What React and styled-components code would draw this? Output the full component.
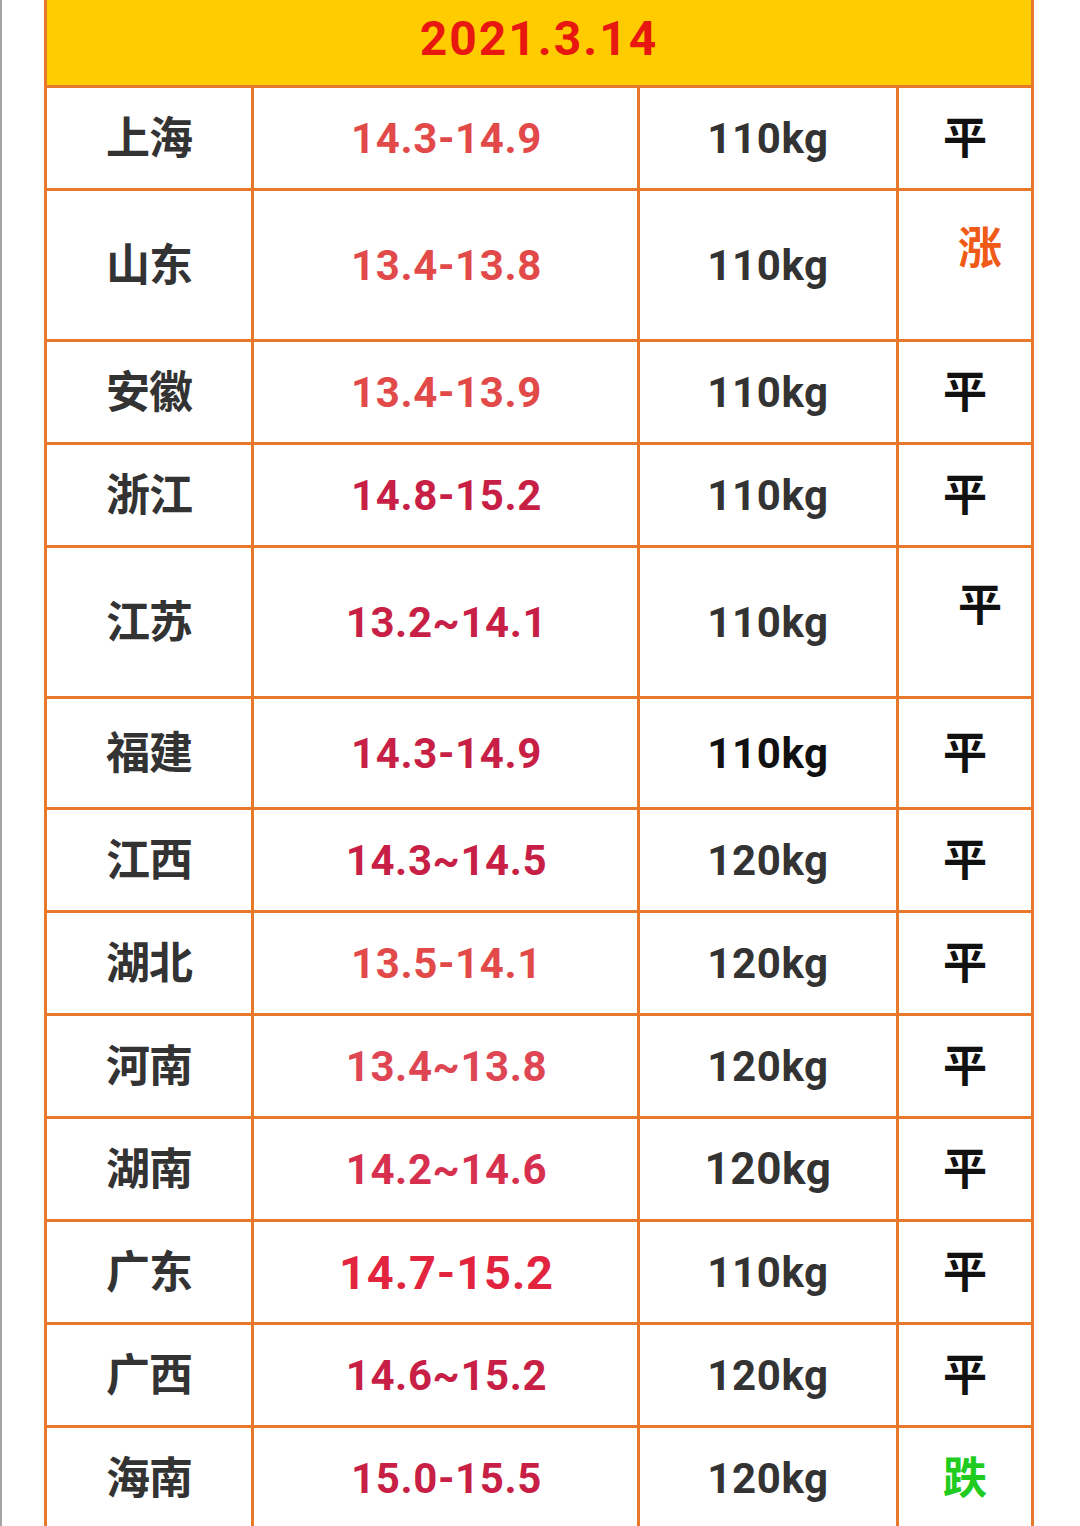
import styled, { createGlobalStyle } from 'styled-components';

const GlobalStyle = createGlobalStyle`
  html, body {
    margin: 0;
    padding: 0;
    background: #ffffff;
  }
  body {
    font-family: 'Roboto', 'Noto Sans CJK SC', sans-serif;
  }
`;

const Page = styled.div`
  border-left: 2px solid #a3a3a3;
  padding-left: 42px;
  box-sizing: border-box;
  overflow: hidden;
  height: 1526px;
`;

const Table = styled.div`
  width: 990px;
  display: grid;
  grid-template-columns: 204px 383px 256px 132px;
  gap: 3px;
  padding: 0 3px 3px 3px;
  background: #e8792b;
  box-sizing: border-box;
`;

const Header = styled.div`
  grid-column: 1 / -1;
  height: 85px;
  background: #ffcc00;
  display: flex;
  align-items: center;
  justify-content: center;
  padding-bottom: 8px;
  box-sizing: border-box;
  color: #e8170f;
  font-family: 'Roboto', sans-serif;
  font-weight: 700;
  font-size: 48px;
  letter-spacing: 2px;
`;

const Cell = styled.div`
  background: #fff;
  height: ${(p) => p.$h}px;
  display: flex;
  align-items: center;
  justify-content: center;
  box-sizing: border-box;
  font-weight: 700;
`;

const Region = styled(Cell)`
  color: #333;
  font-family: 'Noto Sans CJK SC', sans-serif;
  font-size: 44px;
  letter-spacing: -1px;
  padding-bottom: 6px;
`;

const Price = styled(Cell)`
  color: ${(p) => p.$color};
  font-family: 'Roboto', sans-serif;
  font-size: ${(p) => (p.$big ? 47 : 42)}px;
  letter-spacing: ${(p) => (p.$big ? 0.8 : 0.6)}px;
  padding-left: 2px;
`;

const Weight = styled(Cell)`
  color: ${(p) => (p.$dark ? '#111' : '#333')};
  font-family: 'Roboto', sans-serif;
  font-size: ${(p) => (p.$big ? 44 : 42)}px;
  letter-spacing: 0.6px;
`;

const Trend = styled(Cell)`
  color: ${(p) => p.$color};
  font-family: 'Noto Sans CJK SC', sans-serif;
  font-size: 44px;
  padding-left: ${(p) => (p.$shift ? 30 : 0)}px;
  padding-bottom: ${(p) => (p.$shift ? 40 : 6)}px;
`;

const LIGHT = '#e24a4a';
const CRIMSON = '#c71f45';
const BRIGHT = '#e2243e';
const MID = '#d6304e';

const rows = [
  { name: '上海', price: '14.3-14.9', pc: LIGHT, w: '110kg', t: '平', h: 100 },
  { name: '山东', price: '13.4-13.8', pc: LIGHT, w: '110kg', t: '涨', tc: '#f05a17', shift: true, h: 148 },
  { name: '安徽', price: '13.4-13.9', pc: LIGHT, w: '110kg', t: '平', h: 100 },
  { name: '浙江', price: '14.8-15.2', pc: CRIMSON, w: '110kg', t: '平', h: 100 },
  { name: '江苏', price: '13.2~14.1', pc: CRIMSON, w: '110kg', t: '平', shift: true, h: 148 },
  { name: '福建', price: '14.3-14.9', pc: CRIMSON, w: '110kg', t: '平', dark: true, h: 108 },
  { name: '江西', price: '14.3~14.5', pc: CRIMSON, w: '120kg', t: '平', h: 100 },
  { name: '湖北', price: '13.5-14.1', pc: LIGHT, w: '120kg', t: '平', h: 100 },
  { name: '河南', price: '13.4~13.8', pc: '#dd4652', w: '120kg', t: '平', h: 100 },
  { name: '湖南', price: '14.2~14.6', pc: MID, w: '120kg', t: '平', bigW: true, h: 100 },
  { name: '广东', price: '14.7-15.2', pc: BRIGHT, big: true, w: '110kg', t: '平', h: 100 },
  { name: '广西', price: '14.6~15.2', pc: CRIMSON, w: '120kg', t: '平', h: 100 },
  { name: '海南', price: '15.0-15.5', pc: CRIMSON, w: '120kg', t: '跌', tc: '#1fcc1f', h: 100 },
];

function Row({ r }) {
  return (
    <>
      <Region $h={r.h}>{r.name}</Region>
      <Price $h={r.h} $color={r.pc} $big={r.big}>
        {r.price}
      </Price>
      <Weight $h={r.h} $dark={r.dark} $big={r.bigW}>
        {r.w}
      </Weight>
      <Trend $h={r.h} $color={r.tc || '#111'} $shift={r.shift}>
        {r.t}
      </Trend>
    </>
  );
}

function App() {
  return (
    <>
      <GlobalStyle />
      <Page>
        <Table>
          <Header>2021.3.14</Header>
          {rows.map((r) => (
            <Row key={r.name} r={r} />
          ))}
        </Table>
      </Page>
    </>
  );
}

export default App;
